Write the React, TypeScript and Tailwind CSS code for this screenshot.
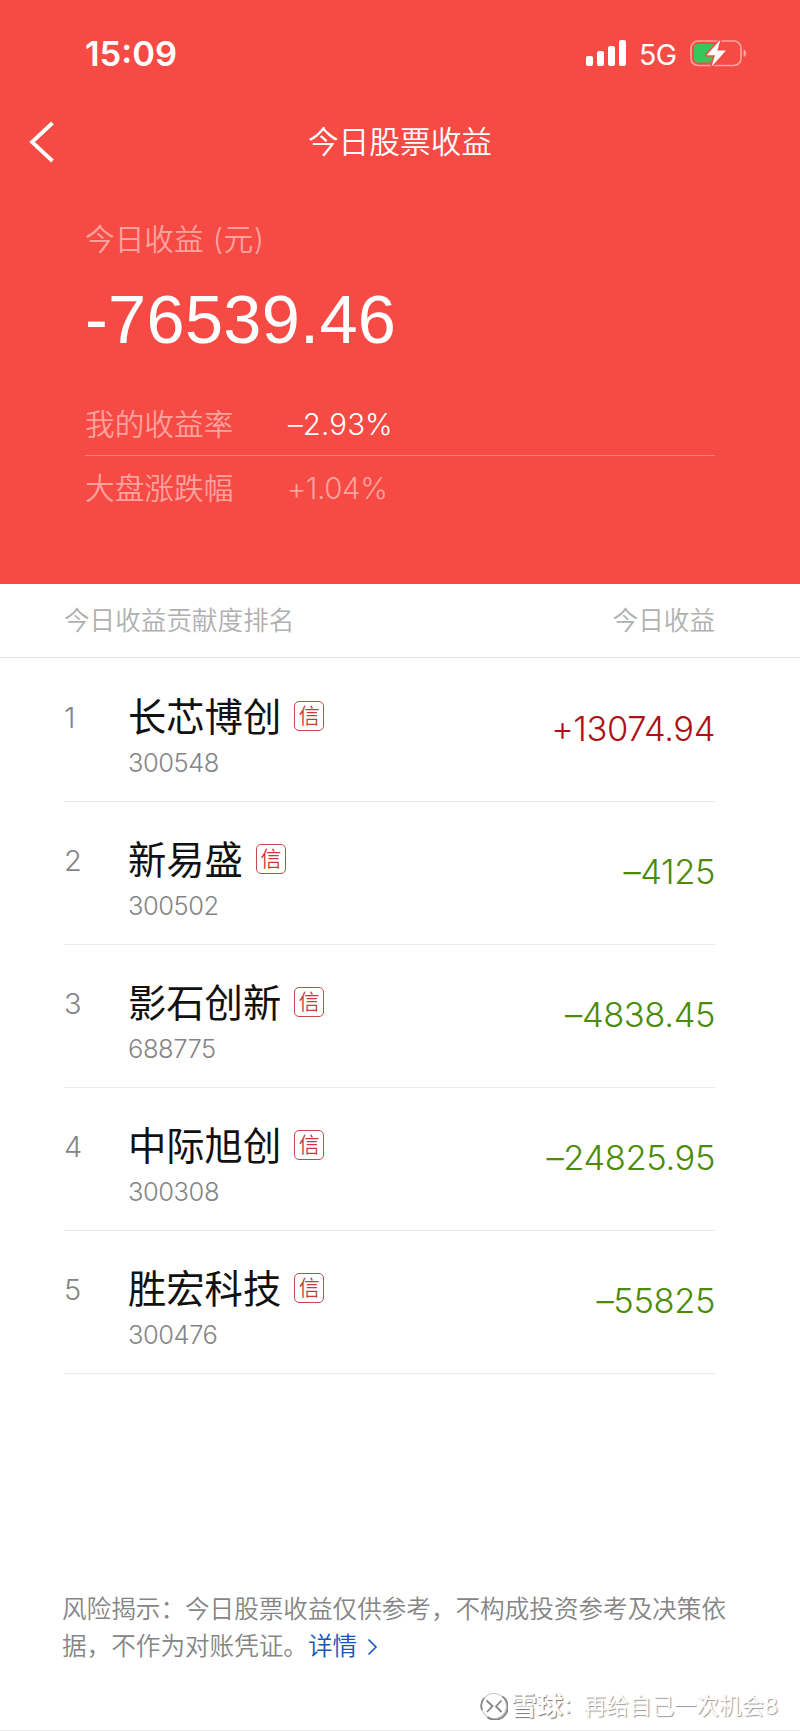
type Holding = {
  rank: number;
  name: string;
  code: string;
  amount: string;
  up?: boolean;
};

const holdings: Holding[] = [
  { rank: 1, name: "长芯博创", code: "300548", amount: "+13074.94", up: true },
  { rank: 2, name: "新易盛", code: "300502", amount: "–4125" },
  { rank: 3, name: "影石创新", code: "688775", amount: "–4838.45" },
  { rank: 4, name: "中际旭创", code: "300308", amount: "–24825.95" },
  { rank: 5, name: "胜宏科技", code: "300476", amount: "–55825" },
];

function StatusBar() {
  return (
    <div className="flex h-[106px] items-center justify-between pl-[85px] pr-[53px] text-white">
      <span className="mt-[2px] text-[34.5px] font-semibold leading-none">15:09</span>
      <div className="flex items-center">
        <svg width="41" height="26" viewBox="0 0 41 26" fill="currentColor">
          <rect x="0" y="16" width="7" height="10" rx="2" />
          <rect x="11" y="11" width="7" height="15" rx="2" />
          <rect x="22" y="6" width="7" height="20" rx="2" />
          <rect x="33" y="0" width="7" height="26" rx="2" />
        </svg>
        <span className="ml-[12px] mt-[4px] w-[38px] text-[28.5px] font-normal leading-none tracking-[-0.6px]">5G</span>
        <svg className="ml-[13px]" width="57" height="30" viewBox="0 0 57 30">
          <rect x="1" y="3" width="50" height="24.5" rx="7" fill="none" stroke="#ffa19c" strokeWidth="1.7" />
          <path d="M53.6 11.5c3.4 1 3.4 6.5 0 7.5z" fill="#ffa19c" />
          <path d="M8 6h17v18.5H8a4 4 0 0 1-4-4V10a4 4 0 0 1 4-4z" fill="#34c759" />
          <path
            d="M30.500 1.500 16.500 17.200h8.400L21.500 28.800l14.500-16.200h-8.600z"
            fill="#fff"
            stroke="#f64a45"
            strokeWidth="3"
            strokeLinejoin="round"
            paintOrder="stroke"
          />
        </svg>
      </div>
    </div>
  );
}

function RateRow({ label, value, dim }: { label: string; value: string; dim?: boolean }) {
  return (
    <div className="flex items-center leading-none">
      <span className="w-[202px] text-[29.7px] text-[#ffa29d]">{label}</span>
      <span
        className={
          dim
            ? "text-[29.5px] tracking-[-0.4px] text-[#ffa29d]"
            : "pl-[1px] text-[29.5px] tracking-[0.1px] text-white"
        }
      >
        {value}
      </span>
    </div>
  );
}

function HoldingRow({ item }: { item: Holding }) {
  return (
    <li className="flex h-[143px] border-b border-[#e9e9e9]">
      <span className="w-[64px] pt-[44px] text-[29px] leading-[30px] text-[#858585]">{item.rank}</span>
      <div className="flex-1 pt-[38px]">
        <div className="flex h-[40px] items-center">
          <span className="text-[38.3px] font-normal leading-none text-[#111]">{item.name}</span>
          <span className="mb-[3px] ml-[13px] flex size-[30px] items-center justify-center rounded-[5px] border border-[#c8474b] text-[21px] leading-none text-[#c8393e]">
            信
          </span>
        </div>
        <div className="mt-[13px] text-[25.5px] leading-[26px] tracking-[-0.45px] text-[#858585]">{item.code}</div>
      </div>
      <span
        className={
          item.up
            ? "pt-[53px] text-[34.5px] leading-[34px] tracking-[-0.4px] text-[#ab1216]"
            : "pt-[53px] text-[34.5px] leading-[34px] tracking-[-0.4px] text-[#4b8b08]"
        }
      >
        {item.amount}
      </span>
    </li>
  );
}

function Watermark() {
  return (
    <div className="flex h-[30px] items-center justify-end pr-[22px] leading-none text-white [text-shadow:1px_1px_1px_#777]">
      <svg width="28" height="28" viewBox="0 0 28 28" fill="none">
        <circle cx="14" cy="14" r="12.5" stroke="#c4c4c4" strokeWidth="1.2" />
        <path d="M22.5 4.500a12.800 12.800 0 0 1-15 20.800M2 18a12.500 12.500 0 0 1 2-12" stroke="#858585" strokeWidth="1.8" />
        <path d="M6.500 8.500 12.500 14 7 20M21.500 8.500 16 14.500l5.500 5.500" stroke="#858585" strokeWidth="1.8" />
      </svg>
      <span className="ml-[3px] text-[26px] font-bold">雪球</span>
      <span className="mr-[2px] w-[19px] text-[19px]">：</span>
      <span className="text-[22.5px] font-normal [text-shadow:1px_1px_1px_#999]">再给自己一次机会8</span>
    </div>
  );
}

export default function App() {
  return (
    <main className="flex h-[1731px] w-[800px] flex-col bg-white font-['Inter','Noto_Sans_CJK_SC',sans-serif] font-[350]">
      <header className="h-[583.5px] bg-[#f64a45]">
        <StatusBar />
        <nav className="grid h-[73px] grid-cols-[1fr_auto_1fr] items-center text-white">
          <svg className="mb-[2px] ml-[28px]" width="28" height="42" viewBox="0 0 28 42" fill="none" stroke="currentColor" strokeWidth="3.8">
            <path d="M24.500 2 4 21l20.500 19" />
          </svg>
          <h1 className="text-[30.7px] leading-none">今日股票收益</h1>
        </nav>
        <section className="pl-[85px] pr-[85px]">
          <div className="mt-[46px] flex h-[30px] items-center text-[29.7px] leading-none text-[#ffa29d]">
            今日收益<span className="ml-[9px] tracking-[0.5px]">(元)</span>
          </div>
          <div className="mt-[26px] font-['Liberation_Sans',sans-serif] text-[68.5px] font-normal leading-[78px] tracking-[0.3px] text-white">
            -76539.46
          </div>
          <div className="mt-[36px] flex h-[60.5px] items-center border-b border-[#fb7c77]">
            <RateRow label="我的收益率" value="–2.93%" />
          </div>
          <div className="flex h-[67px] items-center">
            <RateRow label="大盘涨跌幅" value="+1.04%" dim />
          </div>
        </section>
      </header>

      <div className="flex h-[74px] items-center justify-between border-b border-[#e2e2e2] pl-[64px] pr-[85px] pt-px text-[25.6px] leading-none text-[#b0b0b0]">
        <span>今日收益贡献度排名</span>
        <span>今日收益</span>
      </div>
      <ul className="ml-[64px] mr-[85px] pt-[1.5px]">
        {holdings.map((h) => (
          <HoldingRow key={h.code} item={h} />
        ))}
      </ul>

      <footer className="mt-auto">
        <p className="pl-[62px] pr-[50px] text-[24.6px] leading-[37px] text-[#858585]">
          风险揭示：今日股票收益仅供参考，不构成投资参考及决策依
          <br />
          据，不作为对账凭证。
          <a className="text-[#1557b8]">
            详情
            <svg className="ml-[10px] inline-block align-[-1px]" width="12" height="18" viewBox="0 0 12 18" fill="none" stroke="currentColor" strokeWidth="1.6">
              <path d="M1.500 1.500 9 9l-7.500 7.500" />
            </svg>
          </a>
        </p>
        <div className="mt-[26px] border-b border-[#e8e8e8] pb-[9px]">
          <Watermark />
        </div>
      </footer>
    </main>
  );
}
